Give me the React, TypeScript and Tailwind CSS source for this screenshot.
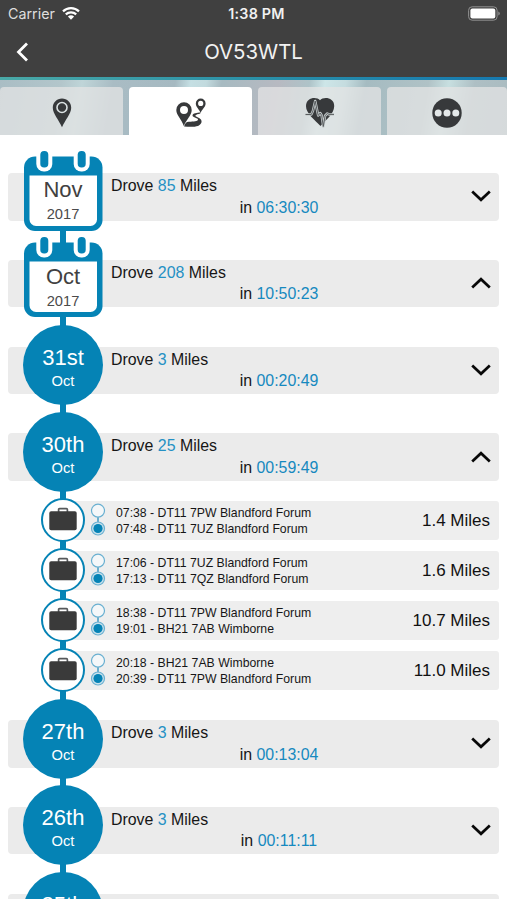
import React, { useState } from 'react';
import clsx from 'clsx';

type Trip = { start: string; end: string; miles: string };
type Entry = {
  id: string;
  kind: 'month' | 'day';
  title: string;
  sub: string;
  miles: number;
  time: string;
  open?: boolean;
  trips?: Trip[];
};

const entries: Entry[] = [
  { id: 'nov', kind: 'month', title: 'Nov', sub: '2017', miles: 85, time: '06:30:30' },
  { id: 'oct', kind: 'month', title: 'Oct', sub: '2017', miles: 208, time: '10:50:23', open: true },
  { id: 'oct31', kind: 'day', title: '31st', sub: 'Oct', miles: 3, time: '00:20:49' },
  {
    id: 'oct30',
    kind: 'day',
    title: '30th',
    sub: 'Oct',
    miles: 25,
    time: '00:59:49',
    open: true,
    trips: [
      { start: '07:38 - DT11 7PW Blandford Forum', end: '07:48 - DT11 7UZ Blandford Forum', miles: '1.4' },
      { start: '17:06 - DT11 7UZ Blandford Forum', end: '17:13 - DT11 7QZ Blandford Forum', miles: '1.6' },
      { start: '18:38 - DT11 7PW Blandford Forum', end: '19:01 - BH21 7AB Wimborne', miles: '10.7' },
      { start: '20:18 - BH21 7AB Wimborne', end: '20:39 - DT11 7PW Blandford Forum', miles: '11.0' },
    ],
  },
  { id: 'oct27', kind: 'day', title: '27th', sub: 'Oct', miles: 3, time: '00:13:04' },
  { id: 'oct26', kind: 'day', title: '26th', sub: 'Oct', miles: 3, time: '00:11:11' },
];

const PinIcon = () => (
  <svg width="20" height="30" viewBox="0 0 20 30">
    <path d="M10 .5C4.800.5.8 4.600.8 9.700c0 6 6 12 9.200 19.500C13.200 21.700 19.200 15.700 19.200 9.700 19.200 4.600 15.200.5 10 .5Z" fill="#37393b" />
    <circle cx="10" cy="9.500" r="5" fill="none" stroke="#dbe2e3" strokeWidth="1.600" />
  </svg>
);

const RouteIcon = () => (
  <svg width="32" height="30" viewBox="0 0 32 30" fill="#37393b">
    <path fillRule="evenodd" d="M9 4.200a7.700 7.700 0 0 0-7.700 7.700c0 5.300 5.200 9 7.500 16C11.400 21.200 16.700 17.200 16.700 11.900A7.700 7.700 0 0 0 9 4.200Zm0 3.700a4 4 0 1 1 0 8 4 4 0 0 1 0-8Z" />
    <path fillRule="evenodd" d="M25.700.5a4.900 4.900 0 0 0-4.900 4.900c0 3.500 3.300 5.500 4.800 9.500 1.600-4 5-6 5-9.500A4.900 4.900 0 0 0 25.700.5Zm0 2.300a2.600 2.600 0 1 1 0 5.200 2.600 2.600 0 0 1 0-5.200Z" />
    <path d="M25.300 14.600c-3 .2-7.800.7-7.800 2.900 0 2.200 6.100 2.300 5.500 4.300-.5 1.600-3.900 1.700-9.300 2-2.200.2-3.600 1.200-4.600 4.700 5.300.5 10.800.5 13.800-.5 3-1.100 4.500-3.900 3.200-6.200-1.500-2.500-6-2.800-5.700-4.300.2-1 3.200-1.600 4.900-2.100Z" />
  </svg>
);

const HealthIcon = () => (
  <svg width="30" height="31" viewBox="0 0 30 31">
    <path d="M15 3.300C11.500-.7 1 .4 1 9.200 1 16.500 10 23 15.500 29 21 22.500 29 17 29.200 9.200 29.400.4 18.500-.7 15 3.300Z" fill="#37393b" />
    <path d="M.5 17.500h5.800l1.600-3.500L10.200 4l3 14.500 2-2.500 1.500 2.500 1.600 11 1.800-10.800 2.200-2.200 1.700.9h5" fill="none" stroke="#c5cbcc" strokeWidth="2.500" strokeLinejoin="round" />
    <path d="M.5 17.500h5.800l1.600-3.500L10.200 4l3 14.500 2-2.500 1.500 2.500 1.600 11 1.800-10.800 2.200-2.200 1.700.9h5" fill="none" stroke="#5a5e60" strokeWidth="1" strokeLinejoin="round" />
  </svg>
);

const MoreIcon = () => (
  <svg width="30" height="30" viewBox="0 0 30 30">
    <circle cx="15" cy="15" r="14.700" fill="#37393b" />
    <g fill="#e4e8e9">
      <circle cx="6.200" cy="15" r="3.500" />
      <circle cx="15" cy="15" r="3.500" />
      <circle cx="23.800" cy="15" r="3.500" />
    </g>
  </svg>
);

const CalendarIcon = () => (
  <svg width="80" height="82" viewBox="0 0 80 82">
    <rect x="1" y="6.500" width="78.500" height="74.500" rx="11" fill="#0583b5" />
    <path d="M6.500 25.500h67.500V69.500a6.500 6.500 0 0 1-6.500 6.500H13A6.500 6.500 0 0 1 6.500 69.500Z" fill="#fff" />
    <rect x="13.300" y="-2" width="16" height="23.500" rx="7.500" fill="#fff" />
    <rect x="50.700" y="-2" width="16" height="23.500" rx="7.500" fill="#fff" />
    <rect x="17.300" y="1" width="8" height="16.500" rx="3.800" fill="#0583b5" />
    <rect x="54.700" y="1" width="8" height="16.500" rx="3.800" fill="#0583b5" />
  </svg>
);

const BriefcaseIcon = () => (
  <svg width="28" height="24" viewBox="0 0 28 24">
    <path d="M9.600 5V2.700q0-1 1-1h6.800q1 0 1 1V5" fill="none" stroke="#55585a" strokeWidth="1.700" />
    <rect x=".3" y="4.300" width="27.400" height="19" rx="1.800" fill="#3a3a3a" />
  </svg>
);

const StopsIcon = () => (
  <svg width="16" height="34" viewBox="0 0 16 34">
    <path d="M8 14v6" stroke="#4a9fc6" strokeWidth="1.600" />
    <circle cx="8" cy="7.700" r="6.500" fill="#f4f7f9" stroke="#69b0d1" strokeWidth="1.200" />
    <circle cx="8" cy="25.500" r="6.500" fill="#c9e1ec" stroke="#69b0d1" strokeWidth="1.200" />
    <circle cx="8" cy="25.500" r="4.600" fill="#0583b5" />
  </svg>
);

const Chevron = ({ up }: { up?: boolean }) => (
  <svg width="20" height="12" viewBox="0 0 20 12" className={clsx(up && 'rotate-180')}>
    <path d="M1.200 1.500 10 9.800l8.800-8.300" fill="none" stroke="#080808" strokeWidth="2.700" />
  </svg>
);

const StatusBar = () => (
  <div className="grid h-[27px] grid-cols-3 items-center px-2 font-['Inter',sans-serif]">
    <div className="flex items-center gap-[7px] text-[14.300px] text-[#dedede]">
      <span>Carrier</span>
      <svg width="18" height="13" viewBox="0 0 18 13">
        <path d="M1 4.400a11.500 11.500 0 0 1 16 0M3.800 7.400a7.500 7.500 0 0 1 10.400 0" fill="none" stroke="#fff" strokeWidth="2.200" />
        <path d="M9 12.800 5.900 9.600a4.500 4.500 0 0 1 6.200 0Z" fill="#fff" />
      </svg>
    </div>
    <span className="pl-[6px] text-center text-[14.300px] font-semibold tracking-[0.2px] text-[#f1f1f1]">1:38 PM</span>
    <svg width="32" height="15" viewBox="0 0 32 15" className="justify-self-end translate-x-px">
      <rect x=".6" y=".8" width="28.500" height="13.400" rx="3.500" fill="none" stroke="#909090" />
      <rect x="2.400" y="2.600" width="24.900" height="9.800" rx="2" fill="#fff" />
      <path d="M30.300 5.500v4q1.500-.5 1.500-2t-1.500-2Z" fill="#909090" />
    </svg>
  </div>
);

const tabs = [
  { id: 'location', icon: <PinIcon /> },
  { id: 'journeys', icon: <RouteIcon /> },
  { id: 'health', icon: <HealthIcon /> },
  { id: 'more', icon: <MoreIcon /> },
];

const TripRow = ({ trip }: { trip: Trip }) => (
  <div className="relative flex h-[50px] items-center pr-2 pl-[63px]">
    <div className="absolute top-0 left-[60px] h-full w-[6px] bg-[#0583b5]" />
    <div className="flex h-[39px] flex-1 items-center rounded-[3px] bg-[#eeeeee] pr-[9px] pl-[27px]">
      <StopsIcon />
      <div className="ml-[10px] flex-1 pt-[3px] text-[12.250px] leading-[15.600px] text-[#161616]">
        <p>{trip.start}</p>
        <p>{trip.end}</p>
      </div>
      <span className="pt-px text-[17px] text-[#111]">{trip.miles} Miles</span>
    </div>
    <div className="absolute top-[3px] left-[41px] flex h-11 w-11 items-center justify-center rounded-full border-2 border-[#0583b5] bg-white pb-[3px]">
      <BriefcaseIcon />
    </div>
  </div>
);

const EntryRow = ({ entry, first, onToggle }: { entry: Entry; first: boolean; onToggle: () => void }) => (
  <div className="relative h-[86.750px] px-2 pt-[25px]">
    <div className={clsx('absolute bottom-0 left-[60px] w-[6px] bg-[#0583b5]', first ? 'top-10' : 'top-0')} />
    <button onClick={onToggle} className="flex h-[47.500px] w-full items-start rounded-[4px] bg-[#ebebeb] pr-2 pl-[103px] text-left">
      <div className="flex-1 text-[15.900px] leading-[21.500px] text-[#161616]">
        <p className="mt-[2px]">
          Drove <span className="text-[#2490c4]">{entry.miles}</span> Miles
        </p>
        <p className="pr-[24px] text-center">
          in <span className="text-[#1689bf]">{entry.time}</span>
        </p>
      </div>
      <span className="self-center pb-px">
        <Chevron up={entry.open} />
      </span>
    </button>
    {entry.kind === 'month' ? (
      <div className="absolute top-[1.500px] left-[23px] h-[82px] w-20">
        <CalendarIcon />
        <div className="absolute inset-x-0 top-[27.500px] text-center">
          <p className="text-[22px] leading-[26px] text-[#414141]">{entry.title}</p>
          <p className="text-[14.700px] leading-[22px] text-[#4b4b4b]">{entry.sub}</p>
        </div>
      </div>
    ) : (
      <div className="absolute top-[3.500px] left-[23px] flex h-20 w-20 flex-col items-center rounded-full bg-[#0583b5] pt-5 text-white">
        <p className="text-[22px] leading-[26px]">{entry.title}</p>
        <p className="text-[14.700px] leading-[20px]">{entry.sub}</p>
      </div>
    )}
  </div>
);

// top edge of the next day while it is still scrolled out of view
const NextDayPeek = ({ title }: { title: string }) => (
  <div className="relative h-[86.750px] px-2 pt-[25px]">
    <div className="h-[47.500px] rounded-[4px] bg-[#ebebeb]" />
    <div className="absolute top-0 left-[60px] h-full w-[6px] bg-[#0583b5]" />
    <div className="absolute top-[3.500px] left-[23px] h-20 w-20 rounded-full bg-[#0583b5] pt-5 text-center text-[22px] leading-[26px] text-white">
      {title}
    </div>
  </div>
);

const App = () => {
  const [activeTab, setActiveTab] = useState('journeys');
  const [items, setItems] = useState(entries);

  const toggle = (id: string) => {
    setItems(items.map((item) => (item.id === id ? { ...item, open: !item.open } : item)));
  };

  return (
    <div className="flex h-[900px] w-[507px] flex-col overflow-hidden bg-white font-['Liberation_Sans',sans-serif]">
      {/* Header */}
      <header className="h-[77px] shrink-0 bg-[#404040]">
        <StatusBar />
        <div className="grid h-[50px] grid-cols-[60px_1fr_60px] items-center">
          <button className="pl-4">
            <svg width="13" height="20" viewBox="0 0 13 20">
              <path d="M11 1.500 2.500 10l8.500 8.500" fill="none" stroke="#fff" strokeWidth="2.800" />
            </svg>
          </button>
          <h1 className="pt-px text-center font-['Inter',sans-serif] text-[20.400px] text-[#f2f2f2]">OV53WTL</h1>
        </div>
      </header>
      <div className="h-[3px] shrink-0 bg-gradient-to-r from-[#49a9a7] via-[#2a91a8] to-[#1679b0]" />

      {/* Tabs */}
      <nav className="grid h-[55px] shrink-0 grid-cols-[123px_123px_123px_120px] gap-[6px] bg-[linear-gradient(100deg,#a9bdc4_0%,#b3c6cb_12%,#bfd5d8_16%,#a9bcc4_22%,#a6b9c1_34%,#c5dfe3_37%,#c2dade_40%,#a7bac1_43%,#b7b9c1_54%,#aec3c8_60%,#cde6e8_63%,#c5dcdf_67%,#a5bbc1_71%,#b0c2c6_83%,#c7dfe0_87%,#aebfc4_92%,#a9bbc0_100%)] pt-[7px]">
        {tabs.map((tab) => (
          <button
            key={tab.id}
            onClick={() => setActiveTab(tab.id)}
            className={clsx(
              'flex items-center justify-center rounded-t-[4px] pt-[3px]',
              tab.id === activeTab ? 'bg-white' : 'bg-[#e4e4e4]/75'
            )}
          >
            {tab.icon}
          </button>
        ))}
      </nav>

      {/* Timeline */}
      <main className="h-[764px] shrink-0 overflow-hidden pt-[13px]">
        {items.map((entry, index) => (
          <div key={entry.id}>
            <EntryRow entry={entry} first={index === 0} onToggle={() => toggle(entry.id)} />
            {entry.open && entry.trips?.map((trip) => <TripRow key={trip.start} trip={trip} />)}
          </div>
        ))}
        <NextDayPeek title="25th" />
      </main>
    </div>
  );
};

export default App;
